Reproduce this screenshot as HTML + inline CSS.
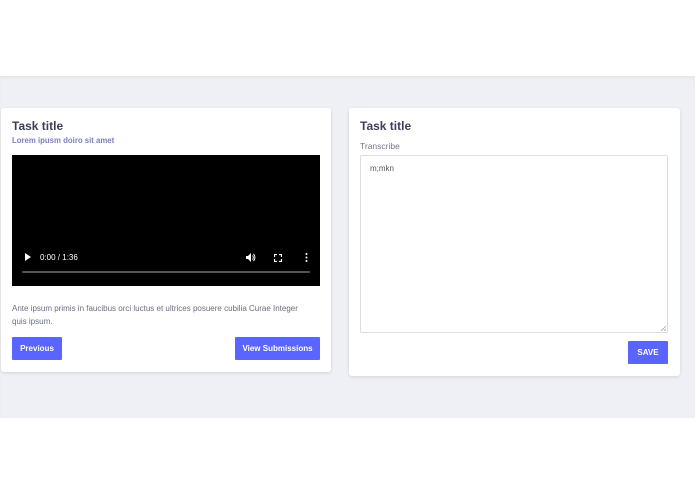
<!DOCTYPE html>
<html><head><style>
*{margin:0;padding:0;box-sizing:border-box}
body{width:695px;height:494px;background:#fff;font-family:"Liberation Sans",sans-serif;position:relative;overflow:hidden}
.band{position:absolute;left:0;top:76px;width:695px;height:342px;background:#eef0f5;box-shadow:inset 0 3px 4px -2px rgba(0,0,0,.06)}
.card{position:absolute;background:#fff;border-radius:3px;box-shadow:0 1px 3px rgba(0,0,0,.12)}
.t{position:absolute;font-size:12px;font-weight:bold;color:#3c3f58}
.btn{position:absolute;background:#5a64fe;color:#fff;font-size:8px;font-weight:bold;display:flex;align-items:center;justify-content:center;border-radius:1px}
</style></head><body>
<div class="band"></div>
<div class="card" style="left:1px;top:108px;width:330px;height:264px">
  <div class="t" style="left:11px;top:11px">Task title</div>
  <div style="position:absolute;left:11px;top:28px;font-size:7.8px;font-weight:bold;color:#7b7fbf">Lorem ipusm doiro sit amet</div>
  <div style="position:absolute;left:11px;top:47px;width:308px;height:131px;background:#000">
    <svg style="position:absolute;left:12px;top:98px" width="7" height="8"><path d="M1 0 L7 4 L1 8Z" fill="#fff"/></svg>
    <div style="position:absolute;left:28px;top:98px;color:#fff;font-size:8px">0:00 / 1:36</div>
    <svg style="position:absolute;left:234px;top:98px" width="10" height="9"><path d="M0 3h2l3-3v9l-3-3H0z" fill="#fff"/><path d="M6.5 2.5a3 3 0 0 1 0 4M7.5 1a5 5 0 0 1 0 7" stroke="#fff" fill="none" stroke-width="1"/></svg>
    <svg style="position:absolute;left:262px;top:99px" width="8" height="8" fill="none" stroke="#fff" stroke-width="1.2"><path d="M0.5 3V0.5H3M5 0.5H7.5V3M7.5 5V7.5H5M3 7.5H0.5V5"/></svg>
    <svg style="position:absolute;left:293px;top:98px" width="3" height="9" fill="#fff"><circle cx="1.5" cy="1" r="1"/><circle cx="1.5" cy="4.5" r="1"/><circle cx="1.5" cy="8" r="1"/></svg>
    <div style="position:absolute;left:10px;top:116px;width:288px;height:2px;background:#555;border-radius:1px"></div>
  </div>
  <div style="position:absolute;left:11px;top:195px;width:302px;font-size:8px;line-height:12.5px;color:#6b6e80">Ante ipsum primis in faucibus orci luctus et ultrices posuere cubilia Curae Integer quis ipsum.</div>
  <div class="btn" style="left:11px;top:229px;width:50px;height:23px">Previous</div>
  <div class="btn" style="left:234px;top:229px;width:85px;height:23px">View Submissions</div>
</div>
<div class="card" style="left:349px;top:108px;width:331px;height:268px">
  <div class="t" style="left:11px;top:11px">Task title</div>
  <div style="position:absolute;left:11px;top:33px;font-size:8.5px;color:#757890">Transcribe</div>
  <div style="position:absolute;left:11px;top:47px;width:308px;height:178px;border:1px solid #dcdde3;border-radius:2px">
    <div style="position:absolute;left:9px;top:8px;font-size:8px;color:#555">m;mkn</div>
    <svg style="position:absolute;right:1px;bottom:1px" width="6" height="6" stroke="#999" stroke-width=".7"><path d="M6 1L1 6M6 4L4 6"/></svg>
  </div>
  <div class="btn" style="left:279px;top:233px;width:40px;height:23px">SAVE</div>
</div>
</body></html>
